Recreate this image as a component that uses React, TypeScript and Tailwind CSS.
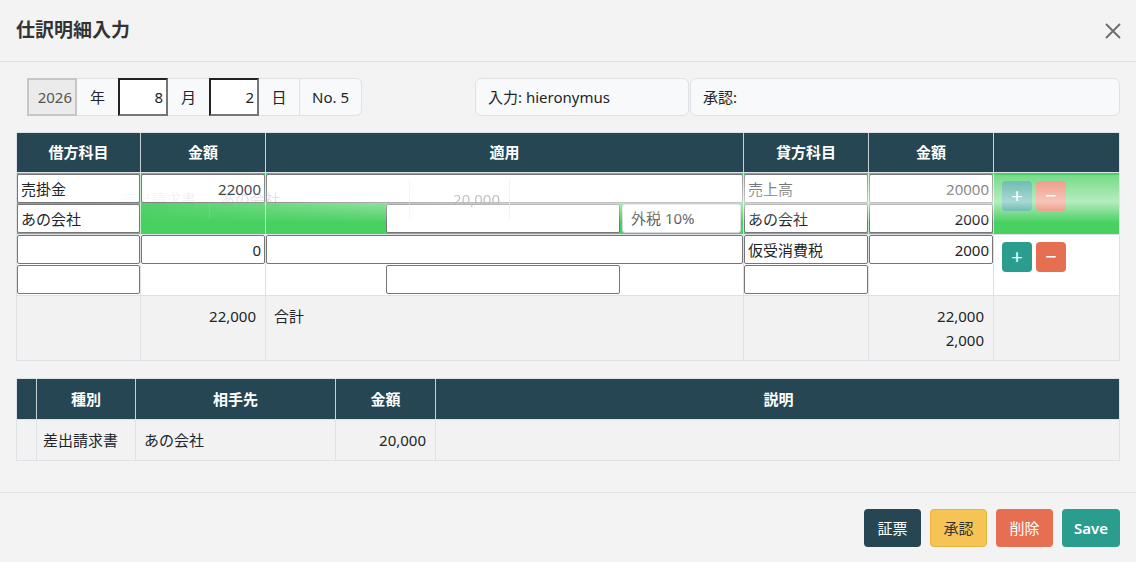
import React from "react";

const FONT = "[font-family:'Noto_Sans','Noto_Sans_CJK_JP',sans-serif]";

function Field({
  value = "",
  right = false,
  muted = false,
  className = "",
}: {
  value?: string;
  right?: boolean;
  muted?: boolean;
  className?: string;
}) {
  return (
    <input
      readOnly
      value={value}
      className={`h-[29px] min-w-0 rounded-[2px] border border-[#767676] bg-white px-[3px] text-[15px] outline-none ${
        right ? "text-right" : ""
      } ${muted ? "text-[#555]" : "text-[#212529]"} ${className}`}
    />
  );
}

function RowButtons() {
  return (
    <div className="flex gap-[4px] pl-[8px] pt-[8px]">
      <button className="flex h-[30px] w-[30px] items-center justify-center rounded-[4px] bg-[#2a9d8f] text-[20px] leading-none text-white">
        +
      </button>
      <button className="flex h-[30px] w-[30px] items-center justify-center rounded-[4px] bg-[#e76f51] text-[20px] leading-none text-white">
        −
      </button>
    </div>
  );
}

const COLS = "grid grid-cols-[124px_125px_478px_125px_125px_127px]";
const SUB_COLS = "grid grid-cols-[20px_99px_200px_100px_685px]";

function JournalTable() {
  return (
    <div className="relative border-x border-b border-[#dee2e6]">
      {/* header */}
      <div className={`${COLS} h-[40px] border-t border-[#dee2e6] bg-[#264653] text-[15px] font-bold text-white`}>
        {["借方科目", "金額", "適用", "貸方科目", "金額", ""].map((h, i) => (
          <div
            key={i}
            className={`flex items-center justify-center ${i < 5 ? "border-r border-[#c9cfd3]" : ""}`}
          >
            {h}
          </div>
        ))}
      </div>

      {/* row 1 — drop target */}
      <div className={`${COLS} h-[62px] border-t border-[#dee2e6] bg-[#48d061]`}>
        <div className="flex flex-col justify-between border-r border-[#c5ecc9] py-px">
          <Field value="売掛金" />
          <Field value="あの会社" />
        </div>
        <div className="flex flex-col border-r border-[#c5ecc9] py-px">
          <Field value="22000" right />
        </div>
        <div className="flex flex-col justify-between border-r border-[#c5ecc9] py-px">
          <Field value="" />
          <div className="flex">
            <div className="w-[120px]" />
            <Field value="" className="w-[234px]" />
            <div className="mx-[2px] flex h-[29px] flex-1 items-center rounded-[3px] border border-[#d6d9dc] bg-white px-[8px] text-[15px] text-[#555]">
              外税 10%
            </div>
          </div>
        </div>
        <div className="flex flex-col justify-between border-r border-[#c5ecc9] py-px">
          <Field value="売上高" />
          <Field value="あの会社" />
        </div>
        <div className="flex flex-col justify-between border-r border-[#c5ecc9] py-px">
          <Field value="20000" right />
          <Field value="2000" right />
        </div>
        <RowButtons />
      </div>

      {/* row 2 */}
      <div className={`${COLS} h-[61px] border-t border-[#dee2e6] bg-white`}>
        <div className="flex flex-col justify-between border-r border-[#dee2e6] pb-px">
          <Field value="" />
          <Field value="" />
        </div>
        <div className="flex flex-col border-r border-[#dee2e6] pb-px">
          <Field value="0" right />
        </div>
        <div className="flex flex-col justify-between border-r border-[#dee2e6] pb-px">
          <Field value="" />
          <div className="flex">
            <div className="w-[120px]" />
            <Field value="" className="w-[234px]" />
          </div>
        </div>
        <div className="flex flex-col justify-between border-r border-[#dee2e6] pb-px">
          <Field value="仮受消費税" />
          <Field value="" />
        </div>
        <div className="flex flex-col border-r border-[#dee2e6] pb-px">
          <Field value="2000" right />
        </div>
        <div className="-mt-px">
          <RowButtons />
        </div>
      </div>

      {/* totals */}
      <div className={`${COLS} h-[65px] border-t border-[#dee2e6] bg-[#f2f2f2] text-[15px] leading-[24px] text-[#212529]`}>
        <div className="border-r border-[#dee2e6]" />
        <div className="border-r border-[#dee2e6] pr-[9px] pt-[8px] text-right">22,000</div>
        <div className="border-r border-[#dee2e6] pl-[8px] pt-[8px]">合計</div>
        <div className="border-r border-[#dee2e6]" />
        <div className="border-r border-[#dee2e6] pr-[9px] pt-[8px] text-right">
          <div>22,000</div>
          <div>2,000</div>
        </div>
        <div />
      </div>

      {/* drag ghost of the document row */}
      <div className="pointer-events-none absolute left-[74px] right-0 top-[43px] h-[48px] bg-[linear-gradient(to_bottom,rgba(255,255,255,0.25),rgba(255,255,255,0.6)_55%,rgba(255,255,255,0))] [mask-image:linear-gradient(to_right,transparent,rgba(0,0,0,0.35)_150px,black_420px)]">
        <div className={`${SUB_COLS} mt-[4px] h-[40px] text-[15px] text-[#bdbdbd]`}>
          <div className="border-r border-[#ececec]/70" />
          <div className="flex items-center border-r border-[#ececec]/70 pl-[10px]">差出請求書</div>
          <div className="flex items-center border-r border-[#ececec]/70 pl-[10px]">あの会社</div>
          <div className="flex items-center justify-end border-r border-[#ececec]/70 pr-[9px]">20,000</div>
          <div />
        </div>
      </div>
    </div>
  );
}

function DocumentTable() {
  return (
    <div className="border-x border-b border-[#dee2e6] text-[15px]">
      <div className={`${SUB_COLS} h-[41px] border-t border-[#dee2e6] bg-[#264653] font-bold text-white`}>
        {["", "種別", "相手先", "金額", "説明"].map((h, i) => (
          <div
            key={i}
            className={`flex items-center justify-center ${i < 4 ? "border-r border-[#c9cfd3]" : ""}`}
          >
            {h}
          </div>
        ))}
      </div>
      <div className={`${SUB_COLS} h-[41px] border-t border-[#dee2e6] bg-[#f2f2f2] text-[#212529]`}>
        <div className="border-r border-[#dee2e6]" />
        <div className="flex items-center border-r border-[#dee2e6] pl-[6px]">差出請求書</div>
        <div className="flex items-center border-r border-[#dee2e6] pl-[8px]">あの会社</div>
        <div className="flex items-center justify-end border-r border-[#dee2e6] pr-[9px]">20,000</div>
        <div />
      </div>
    </div>
  );
}

export default function App() {
  return (
    <div className={`${FONT} h-[562px] w-[1136px] overflow-hidden bg-[#f3f3f3] text-[#212529]`}>
      {/* modal header */}
      <div className="flex h-[62px] items-center justify-between border-b border-[#dee2e6] pl-[16px] pr-[14px]">
        <h1 className="text-[19px] font-semibold text-[#333]">仕訳明細入力</h1>
        <svg width="18" height="18" viewBox="0 0 18 18" className="text-[#6c6c6c]">
          <path d="M2 2L16 16M16 2L2 16" stroke="currentColor" strokeWidth="1.8" fill="none" />
        </svg>
      </div>

      {/* modal body */}
      <div className="px-[16px] pb-[31px] pt-[16px]">
        <div className="flex h-[38px]">
          <div className="w-[459px] pl-[11px]">
            <div className="flex h-[38px] text-[15px]">
              <div className="flex w-[50px] items-center justify-end border-2 border-[#c6c6c6] bg-[#ebebeb] pr-[3px] text-[#555]">
                2026
              </div>
              <div className="flex w-[41px] items-center justify-center border-y border-[#dee2e6] bg-[#f8f9fa]">年</div>
              <div className="flex w-[50px] items-center justify-end border-2 border-b-[#767676] border-l-[#222] border-r-[#767676] border-t-[#222] bg-white pr-[3px]">
                8
              </div>
              <div className="flex w-[41px] items-center justify-center border-y border-[#dee2e6] bg-[#f8f9fa]">月</div>
              <div className="flex w-[50px] items-center justify-end border-2 border-b-[#767676] border-l-[#222] border-r-[#767676] border-t-[#222] bg-white pr-[3px]">
                2
              </div>
              <div className="flex w-[41px] items-center justify-center border-y border-r border-[#dee2e6] bg-[#f8f9fa]">日</div>
              <div className="flex w-[62px] items-center justify-center rounded-r-[6px] border-y border-r border-[#dee2e6] bg-[#f8f9fa]">
                No. 5
              </div>
            </div>
          </div>
          <div className="flex h-[38px] w-[214px] items-center rounded-[6px] border border-[#dee2e6] bg-[#f8f9fa] px-[12px] text-[15px]">
            入力: hieronymus
          </div>
          <div className="ml-px flex h-[38px] w-[430px] items-center rounded-[6px] border border-[#dee2e6] bg-[#f8f9fa] px-[12px] text-[15px]">
            承認:
          </div>
        </div>

        <div className="mt-[16px]">
          <JournalTable />
        </div>

        <div className="mt-[17px]">
          <DocumentTable />
        </div>
      </div>

      {/* modal footer */}
      <div className="flex justify-end gap-[9px] border-t border-[#dee2e6] px-[16px] pt-[16px] text-[15px]">
        <button className="h-[38px] w-[57px] rounded-[4px] bg-[#264653] text-white">証票</button>
        <button className="h-[38px] w-[57px] rounded-[4px] border border-[#e8b23f] bg-[#f6c454] text-[#333]">承認</button>
        <button className="h-[38px] w-[57px] rounded-[4px] bg-[#e76f51] text-white">削除</button>
        <button className="h-[38px] w-[58px] rounded-[4px] bg-[#2a9d8f] font-semibold text-white">Save</button>
      </div>
    </div>
  );
}
